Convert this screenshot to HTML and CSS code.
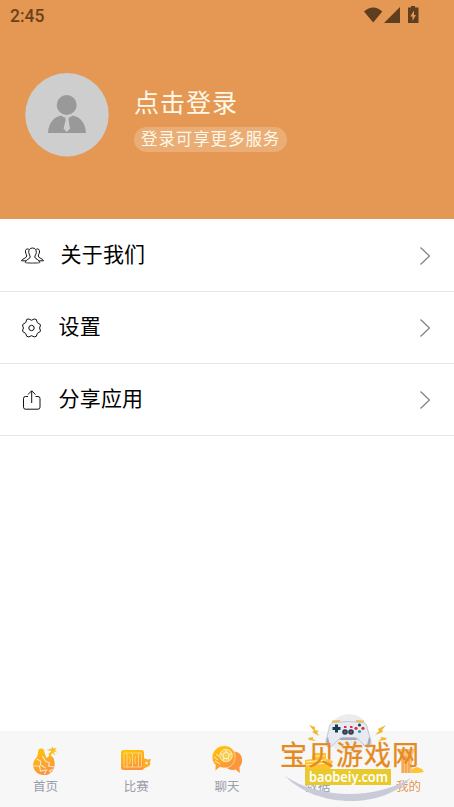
FILE: index.html
```
<!DOCTYPE html>
<html lang="zh-CN">
<head>
<meta charset="utf-8">
<meta name="viewport" content="width=device-width, initial-scale=1">
<title>我的</title>
<link rel="stylesheet" href="styles.css">
</head>
<body>

<div class="app">
  <!-- Header -->
  <header class="header">
    <div class="status-bar">
      <span class="time">2:45</span>
      <svg class="status-icons" width="58" height="20" viewBox="0 0 58 20">
        <path d="M1 5.500Q10.200 -2.500 19.300 5.500L10.200 16.500Z"/>
        <path d="M37 1V17H21Z"/>
        <path d="M48 0h4v1.500h3.500v15.500H45V1.500H48Z"/>
        <path class="bolt" d="M51 4.500L47.300 10.500H49.500V15L53 9H51Z"/>
      </svg>
    </div>
    <div class="profile">
      <svg class="avatar" width="84" height="84" viewBox="0 0 84 84">
        <circle cx="42" cy="41.700" r="41.700" fill="#cecece"/>
        <circle cx="41.700" cy="32" r="10" fill="#999"/>
        <path d="M23 60C23.500 50 29 43.500 36.500 42.500Q42 46 47.500 42.500C55 43.500 60.500 50 61 60Z" fill="#999"/>
        <path d="M36.500 42.500L42 45L47.500 42.500" fill="none" stroke="#cecece"/>
        <path d="M40 44L42 45L44 44L43.500 47L45 55.500L41.700 59L38.500 55.500L40.700 47Z" fill="#cecece"/>
      </svg>
      <div class="profile-text">
        <div class="login">点击登录</div>
        <div class="login-tip">登录可享更多服务</div>
      </div>
    </div>
  </header>

  <!-- Menu -->
  <main class="menu">
    <div class="menu-item">
      <svg class="menu-icon wide" width="24" height="18" viewBox="0 0 24 18">
        <path d="M11.500 1C8.800 1 7.500 3 7.700 5.500C7.800 7.500 9.200 8.500 9.200 10C9.200 12 4.500 12.500 4.200 15.500Q11.500 17 18.800 15.500C18.500 12.500 13.800 12 13.800 10C13.800 8.500 15.200 7.500 15.300 5.500C15.500 3 14.200 1 11.500 1Z"/>
        <path d="M7.800 2.200C5.500 1.200 4.200 2.800 4.500 5C4.700 7 5.800 7.500 5.700 9C5.600 11.500 .8 11.500 .5 13.800H4.800M15.200 2.200C17.500 1.200 18.800 2.800 18.500 5C18.300 7 17.200 7.500 17.300 9C17.400 11.500 22.200 11.500 22.500 13.800H18.200"/>
        <path class="shade" d="M4.500 15.500Q11.500 17 18.500 15.500"/>
      </svg>
      <span class="menu-label">关于我们</span>
      <svg class="arrow" width="12" height="20" viewBox="0 0 12 20"><path d="M1.500 1.500L10.500 10L1.500 18.500"/></svg>
    </div>
    <div class="menu-item">
      <svg class="menu-icon" width="20" height="20" viewBox="0 0 20 20">
        <path d="M5.800 1.300L7.800 1Q10.500 3.500 13.200 1L15.300 1.500Q15.300 5.200 19.300 6.500V8Q17.800 10 19.300 12V13.500Q15.500 14.800 15.300 18.300L13.200 18.900Q10.500 16.500 7.800 18.900L5.700 18.300Q5.500 14.800 1.700 13.500V12Q3.200 10 1.700 8V6.500Q5.700 5.200 5.800 1.300Z"/>
        <circle cx="10.500" cy="10" r="2.700"/>
      </svg>
      <span class="menu-label">设置</span>
      <svg class="arrow" width="12" height="20" viewBox="0 0 12 20"><path d="M1.500 1.500L10.500 10L1.500 18.500"/></svg>
    </div>
    <div class="menu-item">
      <svg class="menu-icon" width="20" height="20" viewBox="0 0 20 20">
        <path d="M7 6.500H4.500Q2.500 6.500 2.500 8.500V17.200Q2.500 19.200 4.500 19.200H17Q19 19.200 19 17.200V8.500Q19 6.500 17 6.500H14.500M10.700 13V.8M7 4.500L10.700 .8L14.400 4.500"/>
      </svg>
      <span class="menu-label">分享应用</span>
      <svg class="arrow" width="12" height="20" viewBox="0 0 12 20"><path d="M1.500 1.500L10.500 10L1.500 18.500"/></svg>
    </div>
  </main>

  <!-- Bottom tabs -->
  <nav class="tabs">
    <svg class="defs" width="0" height="0">
      <linearGradient id="gold" x1="0" y1="0" x2="0.400" y2="1">
        <stop offset="0" stop-color="#ffc800"/>
        <stop offset="1" stop-color="#fa9440"/>
      </linearGradient>
    </svg>
    <div class="tab">
      <svg class="tab-icon" width="32" height="32" viewBox="-1.500 -1 32 32">
        <path d="M7.500 6Q7.500 2.500 10.500 2.500Q14 2.500 13.800 6L16 12L20 9L23 12C26 20 23 28.500 14.500 29C5 29.500 0 21 4 14C6 11.500 7.500 9.500 7.500 6Z" fill="url(#gold)"/>
        <path d="M6 13L10 15L10 19L15 22M12 10L15 15L19 17L18 20L24 21M3 20H9L10 25L16 24L14 28M23 23L19 25L21 27" fill="none" stroke="#fbe3c4" stroke-width="1.200"/>
        <path d="M18 8L21 5L16 4L21 2.500L22 .5L23 2.500L26 2L24.500 4.500L27 6.500L23 5.500L25 9.500L22 7L19 11Z" fill="#ffbd20"/>
      </svg>
      <span class="tab-label">首页</span>
    </div>
    <div class="tab">
      <svg class="tab-icon" width="32" height="32" viewBox="0 0 32 32">
        <rect x="1" y="5" width="23" height="20" rx="2.500" fill="url(#gold)"/>
        <path d="M4 8H21.500V22H4ZM12.500 8V22M7 8V22M18.500 8V22M9 11Q12 15 9 19M16 11Q13 15 16 19" fill="none" stroke="#ffe08a" stroke-width=".8"/>
        <path d="M23 13L28 14.500L31 14L30 17Q31 21 27 22L23 24Z" fill="#ffad27"/>
        <circle cx="26.500" cy="18" r="1.300" fill="#fff0d5"/>
      </svg>
      <span class="tab-label">比赛</span>
    </div>
    <div class="tab">
      <svg class="tab-icon" width="32" height="32" viewBox="0 0 32 32">
        <path d="M20 7C27 5 32 10 31 17Q30.500 20 28.500 22L28.800 28L24.500 24.500C20 26 16 24 14 21Z" fill="#fb963c"/>
        <path d="M13 .8C20 .8 24.500 5.500 24.200 12C24 20 17 25 9 22L4 26L4.500 20C-3 13 3 .8 13 .8Z" fill="url(#gold)" stroke="#fff2d5" stroke-width=".6"/>
        <circle cx="15" cy="10.500" r="6.300" fill="#f7cd58" stroke="#fff0b8" stroke-width=".8"/>
        <path d="M15 7L18.300 9.500L17 13.500H13L11.700 9.500ZM15 4.500V7M18.300 9.500L21 8.500M17 13.500L18.500 16M13 13.500L11.500 16M11.700 9.500L9 8.500M3 12L7 15M4 16L9 19M5 9L8 11.500" fill="none" stroke="#fff7d6" stroke-width=".9"/>
      </svg>
      <span class="tab-label">聊天</span>
    </div>
    <div class="tab">
      <svg class="tab-icon" width="32" height="32" viewBox="0 0 32 32">
        <path d="M3 15L10 14L11 8H24V14L31 16L28 25H3Z" fill="#ffc22d"/>
        <path d="M4 17L24 15M4 20L26 18M12 11H23" stroke="#fff0c5"/>
      </svg>
      <span class="tab-label">数据</span>
    </div>
    <div class="tab active">
      <svg class="tab-icon" width="32" height="32" viewBox="0 0 32 32">
        <path d="M5 4H22L19 12V28H8V14Z" fill="#fbc27d"/>
        <path d="M10 11V28M13 11V28M16 11V28" stroke="#f19a42" stroke-width="1.300"/>
        <path d="M19 24L24 22L29 24L31 27L25 28H19Z" fill="#ffc72d"/>
      </svg>
      <span class="tab-label">我的</span>
    </div>
  </nav>

  <!-- Site badge over the tabs -->
  <svg class="badge" width="144" height="94" viewBox="0 0 144 94">
    <circle cx="69" cy="21" r="20" fill="#ececec"/>
    <path d="M5 63C37 85 93 88 131 65C105 95 38 97 5 63Z" fill="#c9cbd9"/>
    <path d="M29 12L35 14L35 17L39 18L37 19L39 23L32 19L34 18ZM28 25L33 24L33 26L36 28L29 27ZM106 12L98 16L99 18L95 22L103 19L102 17ZM107 25L101 24L101 26L98 28L105 27Z" fill="#f2b92e"/>
    <path d="M54 9.500Q68 7.500 82 9.500Q87 10 87.500 16L91 28Q91 37 86 34L77 25H60L52 33Q46 37 46 28L49 16Q49 10 54 9.500Z" fill="#e8eaf1" stroke="#b1b4c4" stroke-width=".7"/>
    <path d="M48 24L50 32Q45 33 47 25ZM89 24L87 32Q92 33 90 25ZM62 24.500H75L78 27H59Z" fill="#a7aabd"/>
    <path d="M52 8.500L60 8M76 8L84 8.500" stroke="#e6bf63" stroke-width="2"/>
    <path d="M56.500 11.500V19.500M52.500 15.500H60.500" stroke="#183d53" stroke-width="3"/>
    <g fill="#21445a">
      <circle cx="65" cy="19" r="2.800"/>
      <circle cx="71" cy="19" r="2.800"/>
      <circle cx="79.500" cy="12" r="1.600"/>
      <circle cx="79.500" cy="18.500" r="1.600" fill="#2b9fb0"/>
    </g>
    <g fill="#dd2f43">
      <circle cx="65" cy="19" r="1"/>
      <circle cx="71" cy="19" r="1"/>
      <circle cx="76" cy="15.300" r="1.600"/>
      <circle cx="83" cy="15.300" r="1.600"/>
      <path d="M64 13H66.500V15H64ZM70 13H72.500V15H70Z"/>
    </g>
    <text class="badge-name" x="0" y="52" textLength="139">宝贝游戏网</text>
    <rect x="25" y="56" width="86" height="16" fill="#e9ca2c"/>
    <text class="badge-url" x="29" y="68.500" textLength="79" lengthAdjust="spacingAndGlyphs">baobeiy.com</text>
  </svg>
</div>

</body>
</html>
```
FILE: styles.css
```
* {
  box-sizing: border-box;
}

body {
  margin: 0;
  background: #fff;
  color: #000;
  font-family: "Noto Sans CJK SC", sans-serif;
}

.app {
  position: relative;
  display: flex;
  flex-direction: column;
  height: 807px;
  overflow: hidden;
}

/* Header */
.header {
  height: 219px;
  background: #e49853;
}

.status-bar {
  display: flex;
  justify-content: space-between;
  height: 32px;
  padding: 6px 33px 0 10px;
}

.time {
  color: #6d421b;
  font: 500 17.5px/20px Roboto, sans-serif;
}

.status-icons {
  fill: #5f3d1f;
}

.status-icons .bolt {
  fill: #e49853;
}

.profile {
  display: flex;
  padding: 41px 0 0 25px;
}

.profile-text {
  padding: 11px 0 0 25px;
  color: #fff8e8;
}

.login {
  height: 36px;
  font-size: 25px;
  line-height: 34px;
  letter-spacing: 1px;
}

.login-tip {
  height: 25px;
  margin-top: 7px;
  padding: 0 7px;
  border-radius: 13px;
  background: #e9ad75;
  font-size: 16.5px;
  line-height: 23px;
  letter-spacing: 0.9px;
}

/* Menu */
.menu {
  flex: 1;
}

.menu-item {
  display: flex;
  align-items: center;
  height: 72px;
  padding: 0 23px 0 21px;
  border-bottom: 1px solid #e6e6e6;
}

.menu-item:first-child {
  height: 73px;
  padding-top: 1px;
}

.menu-icon {
  fill: none;
  stroke: #111;
  stroke-width: 1;
}

.menu-icon .shade {
  stroke: #999;
  stroke-width: 1.5;
}

.menu-label {
  flex: 1;
  margin-left: 17.5px;
  padding-bottom: 5px;
  font-size: 21px;
  line-height: 30px;
  letter-spacing: 0.2px;
}

.menu-icon.wide + .menu-label {
  margin-left: 15.5px;
}

.arrow {
  fill: none;
  stroke: #808080;
  stroke-width: 1.2;
}

/* Bottom tabs */
.tabs {
  display: flex;
  height: 76px;
  background: #f7f7f7;
}

.defs {
  position: absolute;
}

.tab {
  flex: 1;
  display: flex;
  flex-direction: column;
  align-items: center;
  padding-top: 14px;
  color: #9a9eaa;
}

.tab-label {
  font-size: 12.5px;
  line-height: 18px;
}

.tab.active {
  color: #e49853;
}

/* Site badge */
.badge {
  position: absolute;
  left: 280px;
  top: 713px;
}

.badge-name {
  fill: #e58a20;
  stroke: #e58a20;
  stroke-width: 0.3;
  font-size: 27px;
}

.badge-url {
  fill: #fff;
  font: 600 14.5px "Noto Sans", sans-serif;
}
```
